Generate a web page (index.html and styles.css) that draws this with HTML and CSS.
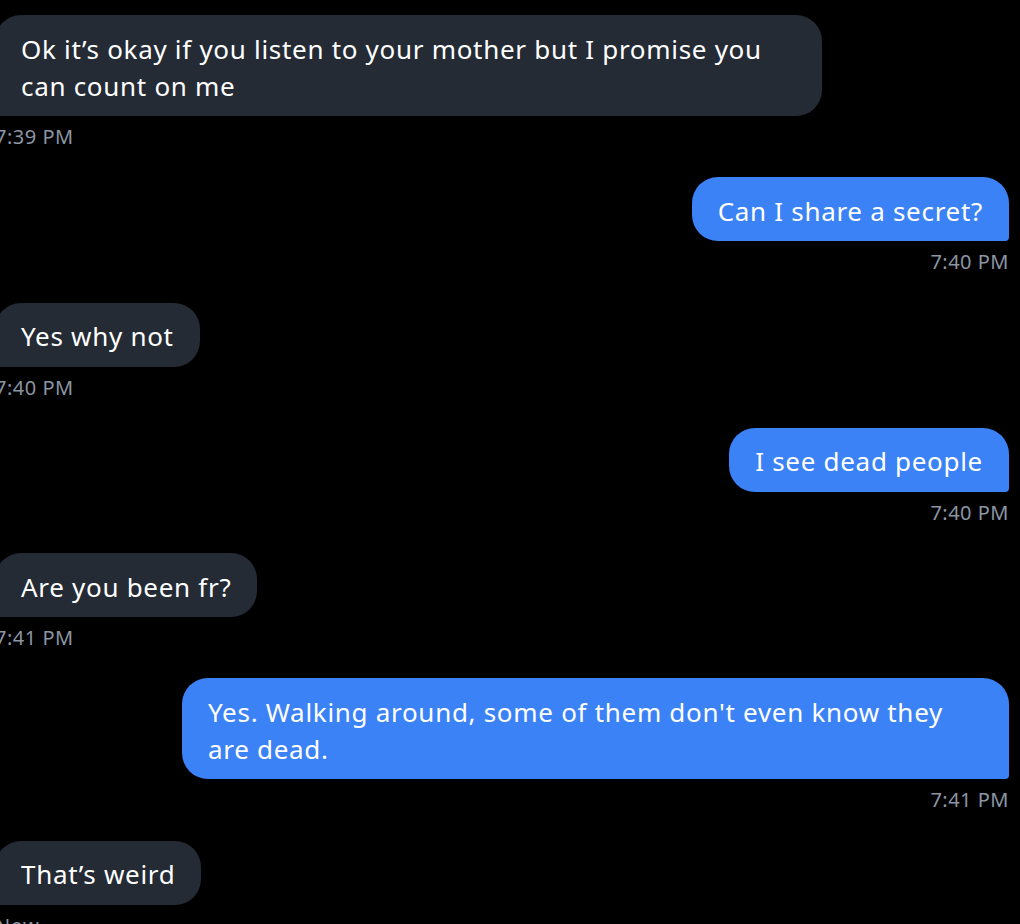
FILE: index.html
```html
<!DOCTYPE html>
<html lang="en">
<head>
<meta charset="utf-8">
<link rel="stylesheet" href="styles.css">
</head>
<body>
<div class="chat">
  <div class="msg in">
    <div class="bubble">Ok it’s okay if you listen to your mother but I promise you can count on me</div>
    <div class="time">7:39 PM</div>
  </div>
  <div class="msg out">
    <div class="bubble">Can I share a secret?</div>
    <div class="time">7:40 PM</div>
  </div>
  <div class="msg in">
    <div class="bubble">Yes why not</div>
    <div class="time">7:40 PM</div>
  </div>
  <div class="msg out">
    <div class="bubble">I see dead people</div>
    <div class="time">7:40 PM</div>
  </div>
  <div class="msg in">
    <div class="bubble">Are you been fr?</div>
    <div class="time">7:41 PM</div>
  </div>
  <div class="msg out">
    <div class="bubble">Yes. Walking around, some of them don't even know they are dead.</div>
    <div class="time">7:41 PM</div>
  </div>
  <div class="msg in">
    <div class="bubble">That’s weird</div>
    <div class="time">Now</div>
  </div>
</div>
</body>
</html>
```
FILE: styles.css
```css
html, body {
  margin: 0;
  padding: 0;
  background: #000;
  height: 100%;
  overflow: hidden;
}
body {
  font-family: "Noto Sans", "Open Sans", sans-serif;
  color: #fff;
}
.chat {
  display: flex;
  flex-direction: column;
  gap: 28.3px;
  padding: 15px 11px 0 0;
  margin-left: -5px;
}
.msg {
  display: flex;
  flex-direction: column;
}
.msg.in { align-items: flex-start; }
.msg.out { align-items: flex-end; }
.bubble {
  max-width: 827px;
  box-sizing: border-box;
  padding: 15.5px 26px 11.5px;
  font-size: 26px;
  letter-spacing: 0.7px;
  line-height: 37px;
  border-radius: 26px;
}
.in .bubble {
  background: #242b35;
  border-bottom-left-radius: 4px;
}
.out .bubble {
  background: #3b82f6;
  border-bottom-right-radius: 4px;
}
.time {
  margin-top: 9px;
  font-size: 20px;
  letter-spacing: 0.5px;
  line-height: 24px;
  color: #8b95a3;
}
```
